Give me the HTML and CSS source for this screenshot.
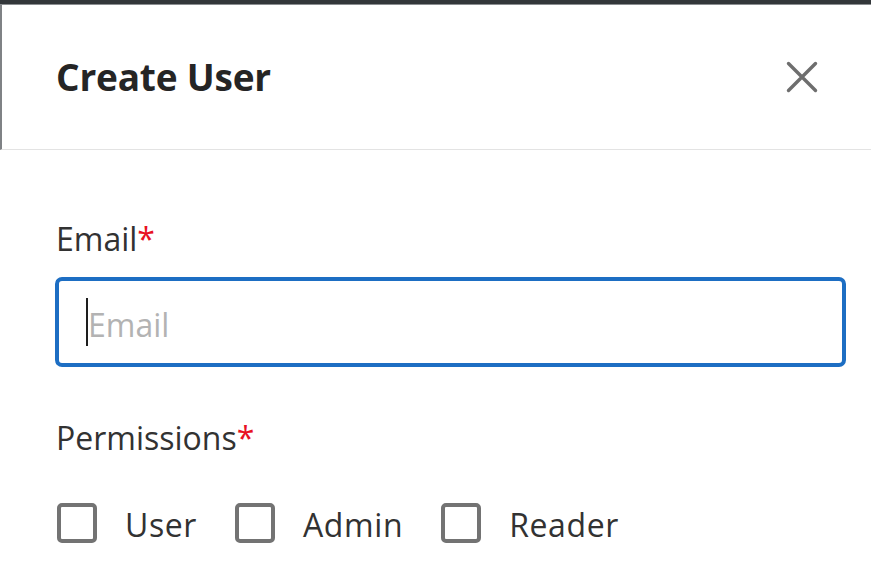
FILE: index.html
```html
<!DOCTYPE html>
<html lang="en">
<head>
<meta charset="utf-8">
<title>Create User</title>
<link rel="stylesheet" href="styles.css">
</head>
<body>
<div class="topbar"></div>
<div class="modal">
  <header class="modal-header">
    <h1 class="modal-title">Create User</h1>
    <button class="close-btn" type="button" aria-label="Close">
      <svg width="32" height="32" viewBox="0 0 32 32" aria-hidden="true">
        <path d="M2.5 2.5 L29.5 29.5 M29.5 2.5 L2.5 29.5" stroke="#6e6e6e" stroke-width="3.4" stroke-linecap="round" fill="none"/>
      </svg>
    </button>
  </header>
  <form class="modal-body">
    <label class="field-label" for="email">Email<span class="req">*</span></label>
    <div class="input-wrap">
      <input id="email" class="text-input" type="text" placeholder="Email">
      <span class="caret"></span>
    </div>
    <div class="field-label perm-label">Permissions<span class="req">*</span></div>
    <div class="check-row">
      <label class="check-item"><span class="check-box"></span><span class="check-text">User</span></label>
      <label class="check-item"><span class="check-box"></span><span class="check-text">Admin</span></label>
      <label class="check-item"><span class="check-box"></span><span class="check-text">Reader</span></label>
    </div>
  </form>
</div>
</body>
</html>
```
FILE: styles.css
```css
html, body {
  margin: 0;
  padding: 0;
  background: #ffffff;
}
body {
  font-family: "Open Sans", "Noto Sans", sans-serif;
  color: #323232;
  overflow: hidden;
}
.topbar {
  height: 4px;
  background: #33373a;
  border-bottom: 1px solid #8b8e91;
}
.modal {
  background: #ffffff;
}
.modal-header {
  height: 145px;
  box-sizing: border-box;
  display: flex;
  align-items: center;
  justify-content: space-between;
  padding: 0 53px 0 54px;
  border-left: 2px solid #7f8285;
  border-bottom: 1px solid #e3e3e3;
}
.modal-title {
  margin: 0;
  font-size: 37px;
  font-weight: 700;
  color: #252525;
  line-height: 44px;
  letter-spacing: -0.2px;
}
.close-btn {
  border: 0;
  background: transparent;
  padding: 0;
  width: 32px;
  height: 32px;
  display: flex;
  cursor: pointer;
}
.modal-body {
  padding: 67px 25px 0 56px;
  margin: 0;
}
.field-label {
  display: block;
  font-size: 32px;
  line-height: 44px;
  color: #323232;
}
.req {
  color: #e81123;
}
.input-wrap {
  position: relative;
  margin-top: 16px;
  margin-left: -1px;
}
.text-input {
  display: block;
  width: 100%;
  height: 90px;
  box-sizing: border-box;
  border: 4px solid #1d6ec3;
  border-radius: 7px;
  padding: 4px 0 0 29px;
  font-family: "Open Sans", "Noto Sans", sans-serif;
  font-size: 32px;
  color: #323232;
  outline: none;
  background: #fff;
}
.text-input::placeholder {
  color: #b3b3b3;
}
.caret {
  position: absolute;
  left: 31px;
  top: 21px;
  width: 2px;
  height: 48px;
  background: #1e1e1e;
}
.perm-label {
  margin-top: 49px;
}
.check-row {
  display: flex;
  align-items: center;
  gap: 38px;
  margin-top: 41px;
  margin-left: 1px;
}
.check-item {
  display: flex;
  align-items: center;
  gap: 28px;
}
.check-box {
  width: 40px;
  height: 40px;
  box-sizing: border-box;
  border: 4px solid #737373;
  border-radius: 5px;
  background: #fff;
}
.check-text {
  font-size: 32px;
  line-height: 44px;
  color: #323232;
  letter-spacing: 0.6px;
  position: relative;
  top: 2px;
}
```
